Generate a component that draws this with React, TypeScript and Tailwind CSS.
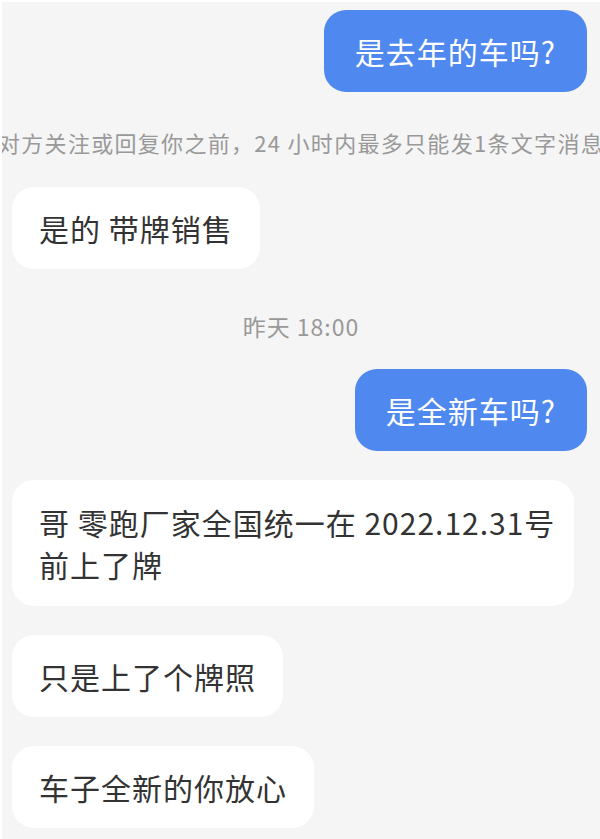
import React from "react";

const font = { fontFamily: '"Noto Sans CJK SC", "Noto Sans", sans-serif' };

function Right({ text, mt }: { text: string; mt: string }) {
  return (
    <div className={`flex justify-end pr-[13px] ${mt}`}>
      <div className="rounded-[22px] bg-[#4f88ee] px-[31px] py-[20px] text-[30px] leading-[42px] tracking-[1px] text-white whitespace-nowrap">
        {text}
      </div>
    </div>
  );
}

function Left({ children, mt, extra = "" }: { children: React.ReactNode; mt: string; extra?: string }) {
  return (
    <div className={`flex justify-start pl-[10px] ${mt}`}>
      <div className={`rounded-[22px] bg-white px-[27px] py-[20px] text-[30px] leading-[42px] tracking-[1px] text-[#333333] whitespace-nowrap ${extra}`}>
        {children}
      </div>
    </div>
  );
}

export default function App() {
  return (
    <div
      className="w-[600px] h-[839px] overflow-hidden bg-[#f5f5f5] border-t-2 border-l-2 border-white flex flex-col"
      style={font}
    >
      <Right text="是去年的车吗?" mt="mt-[8px]" />
      <div className="mt-[35px] flex justify-center">
        <div className="whitespace-nowrap text-[22px] leading-[30px] tracking-[1.3px] text-[#999999] shrink-0">
          对方关注或回复你之前，24 小时内最多只能发1条文字消息
        </div>
      </div>
      <Left mt="mt-[30px]">是的 带牌销售</Left>
      <div className="mt-[42px] flex justify-center">
        <div className="text-[23px] leading-[30px] tracking-[1px] text-[#999999] whitespace-nowrap">昨天 18:00</div>
      </div>
      <Right text="是全新车吗?" mt="mt-[28px]" />
      <Left mt="mt-[29px]" extra="w-[562px] py-[21px]">
        <div>哥 零跑厂家全国统一在 2022.12.31号</div>
        <div>前上了牌</div>
      </Left>
      <Left mt="mt-[29px]">只是上了个牌照</Left>
      <Left mt="mt-[29px]">车子全新的你放心</Left>
    </div>
  );
}
